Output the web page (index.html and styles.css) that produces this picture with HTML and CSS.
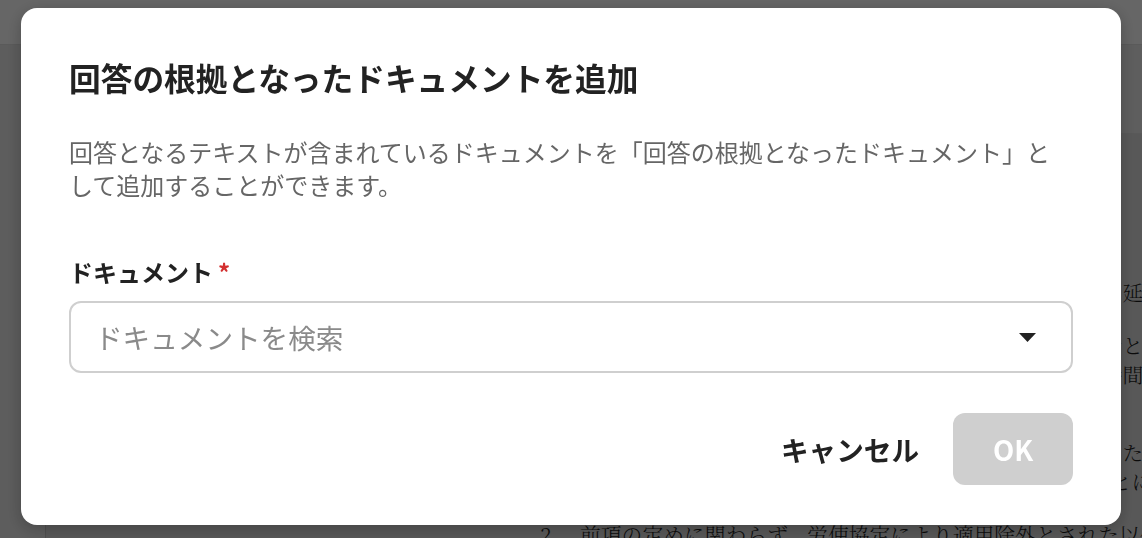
FILE: index.html
```html
<!DOCTYPE html>
<html lang="ja">
<head>
<meta charset="utf-8">
<title>回答の根拠となったドキュメントを追加</title>
<link rel="stylesheet" href="styles.css">
</head>
<body>
  <div class="app">
    <header class="topbar"></header>
    <div class="workspace">
      <aside class="sidebar"></aside>
      <main class="main">
        <div class="toolbar"></div>
        <article class="doc">
          <p class="para">
            <span class="line tail">間を延長し、または休日に労働させることがある。</span>
          </p>
          <p class="para">
            <span class="line tail">る者と書面による協定を締結し、</span>
            <span class="line tail">る時間は法定の範囲内とする。</span>
          </p>
          <p class="para para-wide">
            <span class="line tail">生した場合</span>
            <span class="line tail tail-shift">ことにより労働させることがある。</span>
          </p>
          <p class="para">
            <span class="line"><span class="clause-no">2</span>前項の定めに関わらず、労使協定により適用除外とされた以外の者については、この限りでない。</span>
          </p>
        </article>
      </main>
    </div>
  </div>

  <div class="overlay">
    <section class="dialog" role="dialog" aria-labelledby="dlg-title">
      <h2 class="dialog-title" id="dlg-title">回答の根拠となったドキュメントを追加</h2>
      <p class="dialog-desc">回答となるテキストが含まれているドキュメントを「回答の根拠となったドキュメント」として追加することができます。</p>
      <label class="field-label" for="doc-search">ドキュメント<span class="required">*</span></label>
      <div class="select">
        <input class="select-input" id="doc-search" type="text" placeholder="ドキュメントを検索">
        <svg class="select-caret" width="17" height="9" viewBox="0 0 17 9" aria-hidden="true">
          <path d="M0 0 L17 0 L8.5 9 Z" fill="#222"/>
        </svg>
      </div>
      <div class="actions">
        <button class="btn btn-text" type="button">キャンセル</button>
        <button class="btn btn-primary" type="button" disabled>OK</button>
      </div>
    </section>
  </div>
</body>
</html>
```

FILE: styles.css
```css
html, body {
  margin: 0;
  padding: 0;
  height: 100%;
}

body {
  font-family: "Noto Sans CJK JP", "Noto Sans", sans-serif;
  overflow: hidden;
}

.app {
  height: 538px;
  display: flex;
  flex-direction: column;
  background: #e1e1e1;
}

.topbar {
  height: 44px;
  flex: none;
  background: #ffffff;
  border-bottom: 1px solid #e2e2e2;
}

.workspace {
  flex: 1;
  display: flex;
  min-height: 0;
}

.sidebar {
  width: 45px;
  flex: none;
  background: #e8e8e8;
  border-right: 1px solid #c4c4c4;
}

.main {
  flex: 1;
  display: flex;
  flex-direction: column;
  min-width: 0;
  overflow: hidden;
}

.toolbar {
  height: 88px;
  flex: none;
  background: #ebebeb;
  border-bottom: 1px solid #dedede;
}

.doc {
  flex: 1;
  background: #dddddd;
  padding: 144px 0 0 494px;
  font-family: "Noto Serif CJK JP", "Liberation Serif", serif;
  font-weight: 300;
  font-size: 20.8px;
  line-height: 29px;
  color: #1c1c1c;
  overflow: hidden;
}

.para {
  margin: 0 0 24px;
}

.para-wide {
  margin-top: 49px;
}

.line {
  display: block;
  white-space: nowrap;
}

.tail {
  padding-left: 26em;
}

.tail-shift {
  padding-left: calc(26em + 9px);
}

.clause-no {
  display: inline-block;
  width: 40px;
}

/* dialog */
.overlay {
  position: fixed;
  inset: 0;
  background: rgba(0, 0, 0, 0.6);
  display: flex;
  justify-content: center;
  align-items: flex-start;
  padding-top: 8px;
}

.dialog {
  width: 1100px;
  box-sizing: border-box;
  padding: 48px 48px 40px;
  background: #ffffff;
  border-radius: 16px;
  box-shadow: 0 4px 16px rgba(0, 0, 0, 0.25);
  display: flex;
  flex-direction: column;
}

.dialog-title {
  margin: 0 0 35px;
  font-size: 31.7px;
  line-height: 1.38;
  font-weight: 700;
  color: #222222;
}

.dialog-desc {
  margin: 0 0 54px;
  font-size: 24px;
  line-height: 33px;
  font-weight: 400;
  color: #666666;
}

.field-label {
  margin: 0 0 13px;
  font-size: 24px;
  line-height: 1.4;
  font-weight: 700;
  color: #222222;
}

.required {
  color: #d32f2f;
  margin-left: 5px;
}

.select {
  height: 72px;
  box-sizing: border-box;
  border: 2px solid #cfcfcf;
  border-radius: 12px;
  display: flex;
  align-items: center;
  padding: 0 35px 0 24px;
  gap: 16px;
}

.select-input {
  flex: 1;
  min-width: 0;
  border: none;
  outline: none;
  background: transparent;
  padding: 0;
  font-family: inherit;
  font-size: 27.6px;
  color: #222222;
}

.select-input::placeholder {
  color: #8a8a8a;
}

.select-caret {
  flex: none;
  display: block;
}

.actions {
  margin-top: 40px;
  display: flex;
  justify-content: flex-end;
  gap: 10px;
}

.btn {
  height: 72px;
  border: none;
  border-radius: 12px;
  font-family: inherit;
  font-size: 27.6px;
  font-weight: 700;
  padding: 0 24px;
  cursor: pointer;
}

.btn-text {
  background: transparent;
  color: #222222;
}

.btn-primary {
  width: 120px;
  background: #cfcfcf;
  color: #ffffff;
}
```
